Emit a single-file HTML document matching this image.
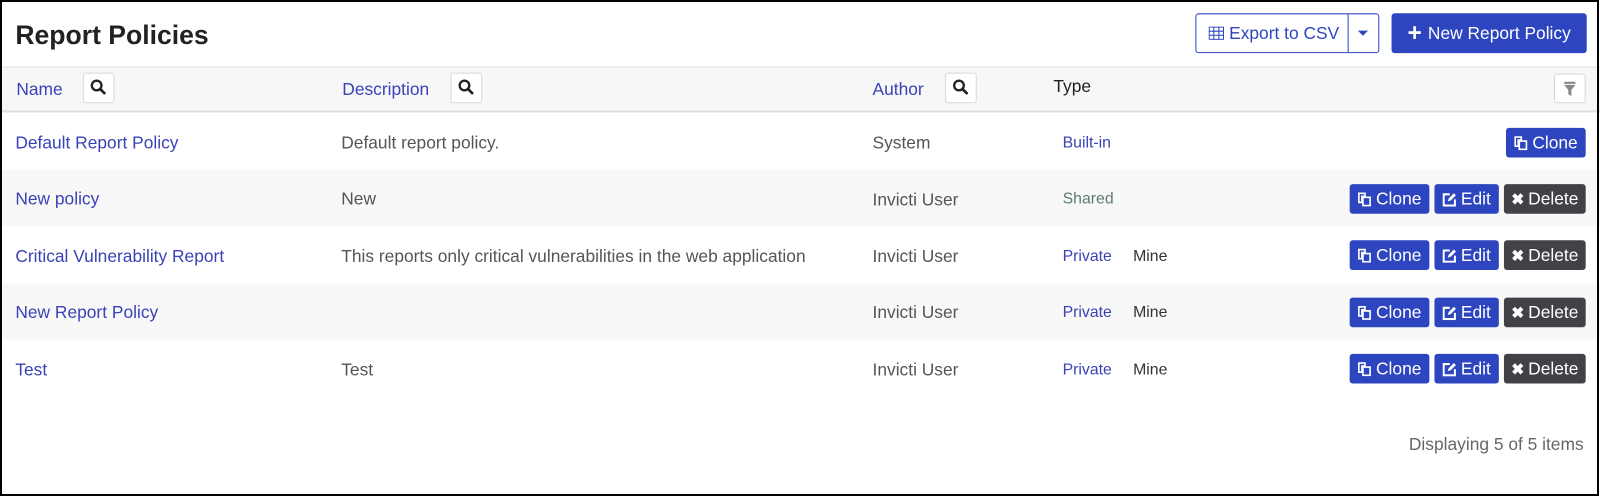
<!DOCTYPE html>
<html><head><style>
*{box-sizing:border-box;margin:0;padding:0}
body{width:1600px;height:497px;background:#fff;font-family:"Liberation Sans",sans-serif;overflow:hidden;position:relative}
.frame{position:absolute;left:0;top:0;width:1599px;height:496px;border:2px solid #000;z-index:5}
.wrap{position:absolute;left:0;top:0;width:1566px;height:486px;transform:scale(1.0217,1.0226);transform-origin:0 0}
.abs{position:absolute;white-space:nowrap}
h1{position:absolute;left:15px;top:19px;font-size:26px;font-weight:bold;color:#222}
.btn{position:absolute;border-radius:3px;font-size:17px;display:flex;align-items:center;justify-content:center}
.thead{position:absolute;left:2px;top:65px;width:1594px;height:45px;background:#f7f7f7;border-top:1px solid #e2e2e2;border-bottom:2px solid #ddd}
.row{position:absolute;left:2px;width:1594px;height:55px}
.alt{background:#f8f8f8}
.lnk{color:#3a42b5;font-size:17px}
.txt{color:#555;font-size:17px}
.sb{position:absolute;width:31px;height:30px;border:1px solid #d8d8d8;border-radius:3px;background:#fff}
.sm{position:absolute;height:29px;border-radius:3px;color:#fff;font-size:17px;display:flex;align-items:center;justify-content:center;gap:4px}
.bl{background:#2d45bf}.dk{background:#414148}
.lnk.ty,.ty{font-size:15.5px}
</style></head><body>
<div class="frame"></div>
<svg width="0" height="0" style="position:absolute"><defs>
<symbol id="cl" viewBox="0 0 14 14"><path d="M1 1H7V4H4V10H1Z" fill="none" stroke="#fff" stroke-width="1.6"/><path d="M5 5H12V13H5Z" fill="none" stroke="#fff" stroke-width="1.6"/></symbol>
<symbol id="ed" viewBox="0 0 14 14"><path d="M7 2H1V13H12V7" fill="none" stroke="#fff" stroke-width="2"/><path d="M5 9L6 6L11 1L13 3L8 8Z" fill="#fff"/></symbol>
<symbol id="sr" viewBox="0 0 18 18"><circle cx="7" cy="7" r="5" fill="none" stroke="#222" stroke-width="2.4"/><path d="M10.5 10.5L15 15" stroke="#222" stroke-width="2.8" stroke-linecap="round"/></symbol>
</defs></svg>
<div class="wrap">
<h1>Report Policies</h1>
<div class="btn" style="left:1170px;top:13px;width:180px;height:39px;border:1px solid #2d45bf;color:#2d45bf;background:#fff;justify-content:flex-start">
 <span style="padding-left:12px;display:flex;align-items:center;gap:5px"><svg width="15" height="13" viewBox="0 0 15 13"><rect x="0.5" y="0.5" width="14" height="12" fill="none" stroke="#2d45bf"/><path d="M0 4.5H15M0 8.5H15M5 0V13M10 0V13" stroke="#2d45bf"/></svg>Export to CSV</span>
 <span style="position:absolute;left:148px;top:0;width:1px;height:37px;background:#2d45bf"></span>
 <span style="position:absolute;left:158px;top:16px;border:5px solid transparent;border-top:5px solid #2d45bf"></span>
</div>
<div class="btn" style="left:1362px;top:13px;width:191px;height:39px;background:#2d45bf;color:#fff;gap:6px"><span style="font-size:24px;font-weight:bold;line-height:1">+</span>New Report Policy</div>

<div class="thead"></div>
<div class="abs lnk" style="left:16px;top:78px">Name</div>
<div class="sb" style="left:81px;top:71px"></div>
<div class="abs lnk" style="left:335px;top:78px">Description</div>
<div class="sb" style="left:441px;top:71px"></div>
<div class="abs lnk" style="left:854px;top:78px">Author</div>
<div class="sb" style="left:925px;top:71px"></div>
<div class="abs" style="left:1031px;top:75px;font-size:17px;color:#222">Type</div>
<div class="sb" style="left:1521px;top:72px;width:31px;height:29px"><svg width="29" height="27" viewBox="0 0 29 27"><path d="M9 7H20V9H9ZM9 10H20L16 15V21L13 19V15Z" fill="#888"/></svg></div>

<div class="row" style="top:111px"></div>
<div class="row alt" style="top:166px"></div>
<div class="row" style="top:222px"></div>
<div class="row alt" style="top:277px"></div>
<div class="row" style="top:333px"></div>

<div class="abs lnk" style="left:15px;top:130px">Default Report Policy</div>
<div class="abs txt" style="left:334px;top:130px">Default report policy.</div>
<div class="abs txt" style="left:854px;top:130px">System</div>
<div class="abs lnk ty" style="left:1040px;top:131px">Built-in</div>

<div class="abs lnk" style="left:15px;top:185px">New policy</div>
<div class="abs txt" style="left:334px;top:185px">New</div>
<div class="abs txt" style="left:854px;top:186px">Invicti User</div>
<div class="abs ty" style="left:1040px;top:186px;color:#5d7a72">Shared</div>

<div class="abs lnk" style="left:15px;top:241px">Critical Vulnerability Report</div>
<div class="abs txt" style="left:334px;top:241px">This reports only critical vulnerabilities in the web application</div>
<div class="abs txt" style="left:854px;top:241px">Invicti User</div>
<div class="abs lnk ty" style="left:1040px;top:242px">Private</div>
<div class="abs ty" style="left:1109px;top:242px;color:#333">Mine</div>

<div class="abs lnk" style="left:15px;top:296px">New Report Policy</div>
<div class="abs txt" style="left:854px;top:296px">Invicti User</div>
<div class="abs lnk ty" style="left:1040px;top:297px">Private</div>
<div class="abs ty" style="left:1109px;top:297px;color:#333">Mine</div>

<div class="abs lnk" style="left:15px;top:352px">Test</div>
<div class="abs txt" style="left:334px;top:352px">Test</div>
<div class="abs txt" style="left:854px;top:352px">Invicti User</div>
<div class="abs lnk ty" style="left:1040px;top:353px">Private</div>
<div class="abs ty" style="left:1109px;top:353px;color:#333">Mine</div>

<div class="sm bl" style="left:1474px;top:125px;width:78px"><svg width="14" height="14"><use href="#cl"/></svg>Clone</div>

<div class="sm bl" style="left:1321px;top:180px;width:78px"><svg width="14" height="14"><use href="#cl"/></svg>Clone</div>
<div class="sm bl" style="left:1404px;top:180px;width:63px"><svg width="14" height="14"><use href="#ed"/></svg>Edit</div>
<div class="sm dk" style="left:1472px;top:180px;width:80px"><b style="font-size:15px">✖</b>Delete</div>

<div class="sm bl" style="left:1321px;top:235px;width:78px"><svg width="14" height="14"><use href="#cl"/></svg>Clone</div>
<div class="sm bl" style="left:1404px;top:235px;width:63px"><svg width="14" height="14"><use href="#ed"/></svg>Edit</div>
<div class="sm dk" style="left:1472px;top:235px;width:80px"><b style="font-size:15px">✖</b>Delete</div>

<div class="sm bl" style="left:1321px;top:291px;width:78px"><svg width="14" height="14"><use href="#cl"/></svg>Clone</div>
<div class="sm bl" style="left:1404px;top:291px;width:63px"><svg width="14" height="14"><use href="#ed"/></svg>Edit</div>
<div class="sm dk" style="left:1472px;top:291px;width:80px"><b style="font-size:15px">✖</b>Delete</div>

<div class="sm bl" style="left:1321px;top:346px;width:78px"><svg width="14" height="14"><use href="#cl"/></svg>Clone</div>
<div class="sm bl" style="left:1404px;top:346px;width:63px"><svg width="14" height="14"><use href="#ed"/></svg>Edit</div>
<div class="sm dk" style="left:1472px;top:346px;width:80px"><b style="font-size:15px">✖</b>Delete</div>

<div class="abs" style="right:16px;top:425px;font-size:17px;color:#666">Displaying 5 of 5 items</div>

<svg class="abs" style="left:88px;top:77px" width="17" height="17"><use href="#sr"/></svg>
<svg class="abs" style="left:448px;top:77px" width="17" height="17"><use href="#sr"/></svg>
<svg class="abs" style="left:932px;top:77px" width="17" height="17"><use href="#sr"/></svg>
</div>
</body></html>
